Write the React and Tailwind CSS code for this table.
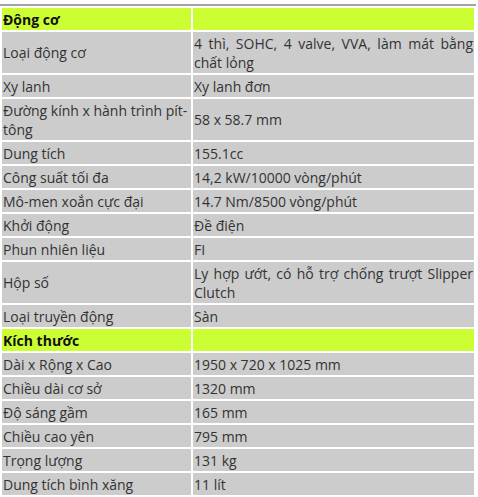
import React from "react";

const sections = [
  {
    title: "Động cơ",
    rows: [
      ["Loại động cơ", "4 thì, SOHC, 4 valve, VVA, làm mát bằng chất lỏng"],
      ["Xy lanh", "Xy lanh đơn"],
      ["Đường kính x hành trình pít-tông", "58 x 58.7 mm"],
      ["Dung tích", "155.1cc"],
      ["Công suất tối đa", "14,2 kW/10000 vòng/phút"],
      ["Mô-men xoắn cực đại", "14.7 Nm/8500 vòng/phút"],
      ["Khởi động", "Đề điện"],
      ["Phun nhiên liệu", "FI"],
      ["Hộp số", "Ly hợp ướt, có hỗ trợ chống trượt Slipper Clutch"],
      ["Loại truyền động", "Sàn"],
    ],
  },
  {
    title: "Kích thước",
    rows: [
      ["Dài x Rộng x Cao", "1950 x 720 x 1025 mm"],
      ["Chiều dài cơ sở", "1320 mm"],
      ["Độ sáng gầm", "165 mm"],
      ["Chiều cao yên", "795 mm"],
      ["Trọng lượng", "131 kg"],
      ["Dung tích bình xăng", "11 lít"],
    ],
  },
];

function App() {
  return (
    <div className="bg-white w-[478px] pt-[4px] font-['Open_Sans',sans-serif] text-[14px] leading-[19px] text-[#333]">
      <table className="w-[476px] border-separate border-spacing-[2px] border-t-2 border-[#a3a3a3] table-fixed">
        <colgroup>
          <col className="w-[189px]" />
          <col />
        </colgroup>
        <tbody>
          {sections.map((section) => (
            <React.Fragment key={section.title}>
              <tr>
                <td className="bg-[#ccff33] px-[1px] py-[1.5px] font-bold text-[#111]">
                  {section.title}
                </td>
                <td className="bg-[#ccff33] px-[1px] py-[1.5px]"></td>
              </tr>
              {section.rows.map(([label, value]) => (
                <tr key={label}>
                  <td className="bg-[#cccccc] px-[1px] py-[1.5px] align-middle">
                    {label}
                  </td>
                  <td className="bg-[#cccccc] px-[1px] py-[1.5px] align-middle text-justify">
                    {value}
                  </td>
                </tr>
              ))}
            </React.Fragment>
          ))}
        </tbody>
      </table>
    </div>
  );
}

export default App;
